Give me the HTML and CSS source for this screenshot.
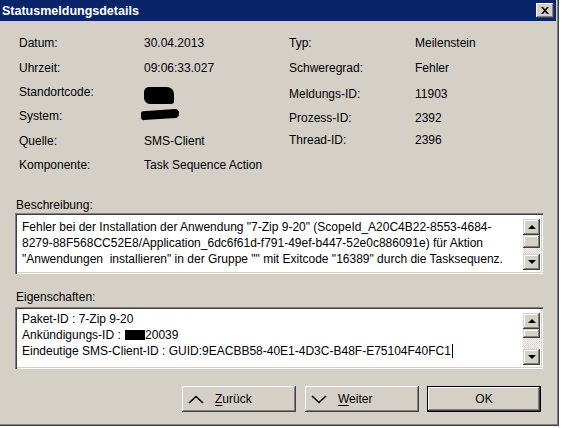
FILE: index.html
```html
<!DOCTYPE html>
<html lang="de">
<head>
<meta charset="utf-8">
<title>Statusmeldungsdetails</title>
<link rel="stylesheet" href="styles.css">
</head>
<body>
<div class="window">
  <div class="titlebar">
    <span class="title">Statusmeldungsdetails</span>
    <span class="close">
      <svg width="8" height="7" viewBox="0 0 8 7"><path d="M0 0h2l2 2.2L6 0h2L5 3.5 8 7H6L4 4.8 2 7H0l3-3.5z" fill="#000"/></svg>
    </span>
  </div>
  <div class="content">
    <div class="fields">
      <div class="col col-left">
        <span class="lbl">Datum:</span><span class="val">30.04.2013</span>
        <span class="lbl">Uhrzeit:</span><span class="val">09:06:33.027</span>
        <span class="lbl">Standortcode:</span><span class="val"><span class="blob blob-a"></span></span>
        <span class="lbl">System:</span><span class="val"><span class="blob blob-b"></span></span>
        <span class="lbl">Quelle:</span><span class="val">SMS-Client</span>
        <span class="lbl">Komponente:</span><span class="val">Task Sequence Action</span>
      </div>
      <div class="col col-right">
        <span class="lbl">Typ:</span><span class="val">Meilenstein</span>
        <span class="lbl">Schweregrad:</span><span class="val">Fehler</span>
        <span class="lbl">Meldungs-ID:</span><span class="val">11903</span>
        <span class="lbl">Prozess-ID:</span><span class="val">2392</span>
        <span class="lbl">Thread-ID:</span><span class="val">2396</span>
      </div>
    </div>

    <div class="group-label label-desc">Beschreibung:</div>
    <div class="textbox box-desc">
      <div class="text">
        <div class="line">Fehler bei der Installation der Anwendung "7-Zip 9-20" (ScopeId_A20C4B22-8553-4684-</div>
        <div class="line">8279-88F568CC52E8/Application_6dc6f61d-f791-49ef-b447-52e0c886091e) für Aktion</div>
        <div class="line">"Anwendungen&nbsp; installieren" in der Gruppe "" mit Exitcode "16389" durch die Tasksequenz.</div>
      </div>
      <div class="scrollbar sb-desc">
        <div class="sbtn"><span class="arrow-up"></span></div>
        <div class="thumb"></div>
        <div class="track"></div>
        <div class="sbtn"><span class="arrow-down"></span></div>
      </div>
    </div>

    <div class="group-label label-props">Eigenschaften:</div>
    <div class="textbox box-props">
      <div class="text">
        <div class="line">Paket-ID : 7-Zip 9-20</div>
        <div class="line">Ankündigungs-ID : <span class="redact"></span>20039</div>
        <div class="line">Eindeutige SMS-Client-ID : GUID:9EACBB58-40E1-4D3C-B48F-E75104F40FC1<span class="caret"></span></div>
      </div>
      <div class="scrollbar sb-props">
        <div class="sbtn"><span class="arrow-up"></span></div>
        <div class="thumb"></div>
        <div class="track"></div>
        <div class="sbtn"><span class="arrow-down"></span></div>
      </div>
    </div>

    <div class="buttons">
      <div class="btn btn-nav">
        <svg class="chev" width="16" height="9" viewBox="0 0 16 9"><polyline points="1,8 8,1.5 15,8" fill="none" stroke="#000" stroke-width="1.6"/></svg>
        <span class="btn-text"><u>Z</u>urück</span>
      </div>
      <div class="btn btn-nav">
        <svg class="chev" width="16" height="9" viewBox="0 0 16 9"><polyline points="1,1 8,7.5 15,1" fill="none" stroke="#000" stroke-width="1.6"/></svg>
        <span class="btn-text"><u>W</u>eiter</span>
      </div>
      <div class="btn btn-default"><span class="btn-inner">OK</span></div>
    </div>
  </div>
</div>
</body>
</html>
```
FILE: styles.css
```css
* { box-sizing: border-box; }

html, body {
  margin: 0;
  padding: 0;
  background: #ffffff;
}

body {
  font-family: "Liberation Sans", Arial, sans-serif;
  font-size: 12px;
  color: #000;
  width: 563px;
  height: 428px;
  overflow: hidden;
}

.window {
  width: 559px;
  height: 426px;
  background: #d4d0c8;
  box-shadow: inset -1px -1px #404040, inset -2px -2px #808080, inset -3px -3px #d4d0c8;
  padding-right: 3px;
  display: flex;
  flex-direction: column;
}

.titlebar {
  height: 21px;
  background: #0a246a;
  display: flex;
  align-items: center;
  justify-content: space-between;
  padding: 0 2px 0 2px;
  flex: none;
}

.title {
  color: #fff;
  font-weight: bold;
  font-size: 12.5px;
  letter-spacing: 0;
}

.close {
  width: 18px;
  height: 15px;
  background: #d4d0c8;
  box-shadow: inset -1px -1px #404040, inset 1px 1px #fff, inset -2px -2px #808080;
  display: flex;
  align-items: center;
  justify-content: center;
}

.content {
  flex: 1;
  display: flex;
  flex-direction: column;
}

.fields {
  display: flex;
  margin-top: 10px;
  padding-left: 19px;
  height: 146px;
}

.col {
  display: grid;
  align-items: center;
}

.col-left {
  width: 270px;
  grid-template-columns: 125px auto;
  grid-template-rows: 24px 25px 24px 24px 25px 24px;
}

.col-right {
  grid-template-columns: 126px auto;
  grid-template-rows: 24px 26px 25px 24px 20px;
  align-content: start;
}

.val {
  display: flex;
  align-items: center;
}

.blob {
  display: inline-block;
  background: #000;
}

.blob-a {
  width: 30px;
  height: 17px;
  margin-top: 6px;
  border-radius: 5px 7px 3px 6px;
}

.blob-b {
  width: 38px;
  height: 9px;
  margin-left: -3px;
  margin-top: -4px;
  border-radius: 2px 4px 4px 3px;
  transform: skewY(-4deg);
}

.group-label {
  line-height: 16px;
  padding-left: 16px;
}

.label-desc { margin-top: 20px; }
.label-props { margin-top: 15px; }

.textbox {
  margin-left: 15px;
  width: 528px;
  height: 61px;
  background: #fff;
  box-shadow: inset 1px 1px #808080, inset 2px 2px #404040, inset -1px -1px #fff, inset -2px -2px #d4d0c8;
  padding: 2px;
  display: flex;
}

.box-desc { margin-top: 0; }
.box-props { margin-top: 2px; height: 62px; }

.text {
  flex: 1;
  padding-left: 5px;
  line-height: 16px;
  white-space: nowrap;
  overflow: hidden;
}

.box-desc .text { padding-top: 4px; }
.box-props .text { padding-top: 2px; }

.redact {
  display: inline-block;
  width: 20px;
  height: 10px;
  background: #000;
  vertical-align: -1px;
  margin-left: 1px;
}

.caret {
  display: inline-block;
  width: 1px;
  height: 14px;
  background: #000;
  vertical-align: -3px;
  margin-left: 1px;
}

.scrollbar {
  width: 17px;
  display: flex;
  flex-direction: column;
  flex: none;
  margin-right: 1px;
}

.sb-desc { padding-top: 4px; }
.sb-props { padding-top: 4px; }

.sbtn {
  height: 16px;
  background: #d4d0c8;
  box-shadow: inset -1px -1px #404040, inset 1px 1px #d4d0c8, inset -2px -2px #808080, inset 2px 2px #fff;
  display: flex;
  align-items: center;
  justify-content: center;
  flex: none;
}

.thumb {
  background: #d4d0c8;
  box-shadow: inset -1px -1px #404040, inset 1px 1px #d4d0c8, inset -2px -2px #808080, inset 2px 2px #fff;
  flex: none;
}

.track {
  background-color: #fff;
  background-image: repeating-conic-gradient(#d4d0c8 0 25%, #ffffff 0 50%);
  background-size: 2px 2px;
  flex: none;
}

.sb-desc .thumb { height: 13px; }
.sb-desc .track { height: 6px; }
.sb-props .thumb { height: 9px; }
.sb-props .track { height: 11px; }

.arrow-up {
  width: 0;
  height: 0;
  border-left: 4px solid transparent;
  border-right: 4px solid transparent;
  border-bottom: 4px solid #000;
}

.arrow-down {
  width: 0;
  height: 0;
  border-left: 4px solid transparent;
  border-right: 4px solid transparent;
  border-top: 4px solid #000;
}

.buttons {
  display: flex;
  margin-top: 17px;
  padding-left: 182px;
  gap: 9px;
}

.btn {
  width: 114px;
  height: 26px;
  background: #d4d0c8;
  display: flex;
  align-items: center;
}

.btn-nav {
  box-shadow: inset -1px -1px #404040, inset 1px 1px #fff, inset -2px -2px #808080;
  padding-left: 6px;
  gap: 11px;
}

.btn-nav:nth-child(2) { margin-right: -1px; }

.chev { flex: none; }

.btn-default {
  border: 1px solid #000;
  justify-content: center;
  box-shadow: inset -1px -1px #404040, inset 1px 1px #fff, inset -2px -2px #808080;
}

u { text-decoration: underline; text-underline-offset: 2px; }
```
